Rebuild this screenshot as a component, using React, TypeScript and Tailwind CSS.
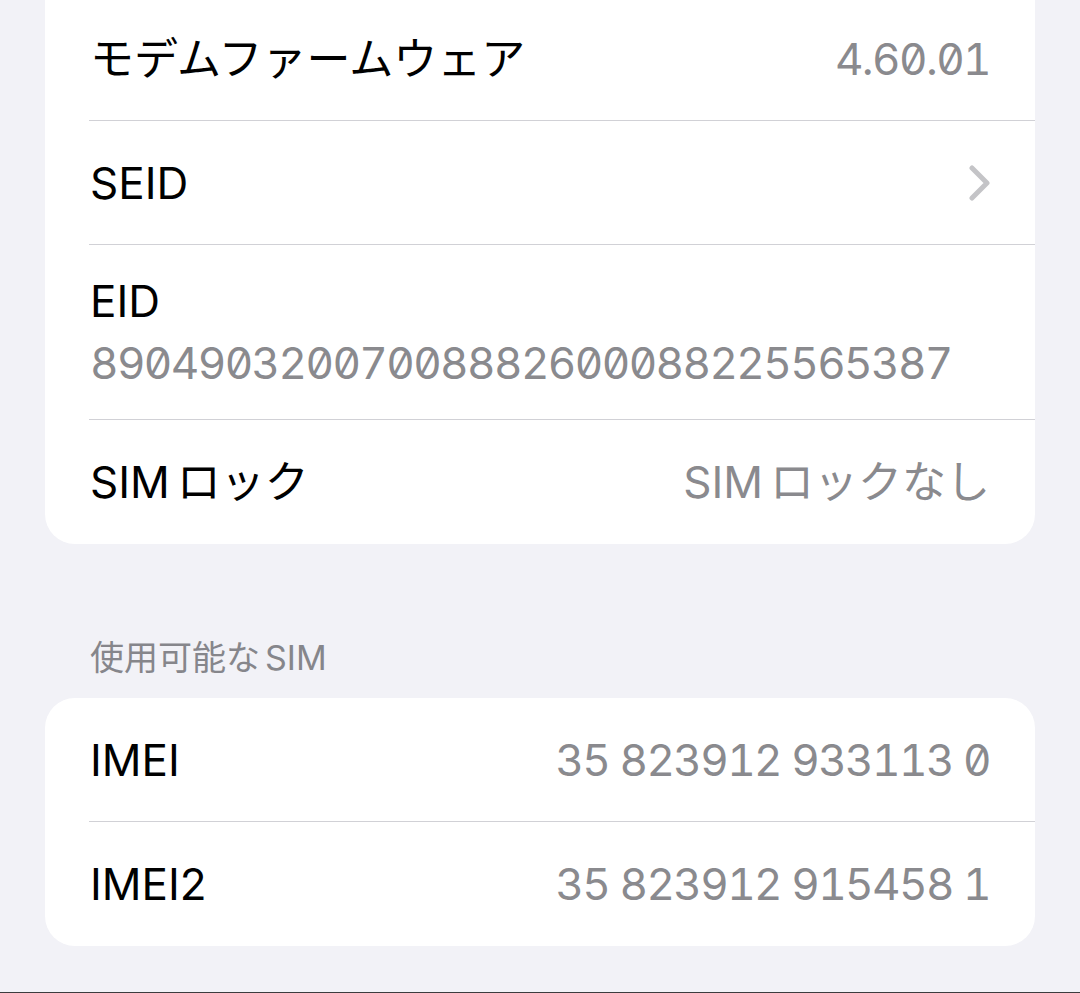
import type { ReactNode } from "react";

const font = "font-['Inter','Noto_Sans_CJK_JP',sans-serif]";
const valueCls = `text-[#8a8a8e] [font-feature-settings:'zero','tnum']`;
const numCls = "tracking-[-1.6px]";

function Sim({ children }: { children: ReactNode }) {
  return (
    <>
      <span className="mr-[7px]">SIM</span>
      {children}
    </>
  );
}

function Row({
  label,
  value,
  chevron,
  last,
  className = "",
  valueClass = "",
}: {
  label: ReactNode;
  value?: ReactNode;
  chevron?: boolean;
  last?: boolean;
  className?: string;
  valueClass?: string;
}) {
  return (
    <div
      className={`flex items-center justify-between pl-px pr-[45px] ${
        last ? "" : "border-b border-[#d1d1d6]"
      } ${className}`}
    >
      <span className="text-black">{label}</span>
      {value && <span className={`${valueCls} ${valueClass}`}>{value}</span>}
      {chevron && (
        <svg width="22" height="36" viewBox="0 0 22 36" className="mr-[-1px]">
          <path
            d="M3 3 L18 18 L3 33"
            fill="none"
            stroke="#c4c4c7"
            strokeWidth="5"
            strokeLinecap="round"
            strokeLinejoin="round"
          />
        </svg>
      )}
    </div>
  );
}

export default function App() {
  return (
    <div
      className={`h-[993px] w-full overflow-hidden bg-[#f2f2f7] ${font} text-[44px] leading-[62px] flex flex-col`}
    >
      <div className="mx-[45px] -mt-[40px] pt-[40px] rounded-[30px] bg-white pl-[44px]">
        <Row
          label="モデムファームウェア"
          value="4.60.01"
          valueClass={numCls}
          className="h-[121px] pb-[2px]"
        />
        <Row label="SEID" chevron className="h-[124px]" />
        <div className="flex flex-col justify-center pl-px pr-[45px] h-[175px] border-b border-[#d1d1d6]">
          <span className="text-black">EID</span>
          <span className={`${valueCls} ${numCls}`}>89049032007008882600088225565387</span>
        </div>
        <Row
          label={<Sim>ロック</Sim>}
          value={<Sim>ロックなし</Sim>}
          last
          className="h-[124px]"
        />
      </div>

      <div className="mt-[92px] mb-[18px] pl-[90px] text-[34px] leading-[44px] text-[#86868b]">
        使用可能な<span className="ml-[5px]">SIM</span>
      </div>

      <div className="mx-[45px] rounded-[30px] bg-white pl-[44px]">
        <Row label="IMEI" value="35 823912 933113 0" valueClass={numCls} className="h-[124px]" />
        <Row label="IMEI2" value="35 823912 915458 1" valueClass={numCls} last className="h-[124px]" />
      </div>

      <div className="flex-1" />
      <div className="h-px bg-[#3c3c3e]" />
    </div>
  );
}
